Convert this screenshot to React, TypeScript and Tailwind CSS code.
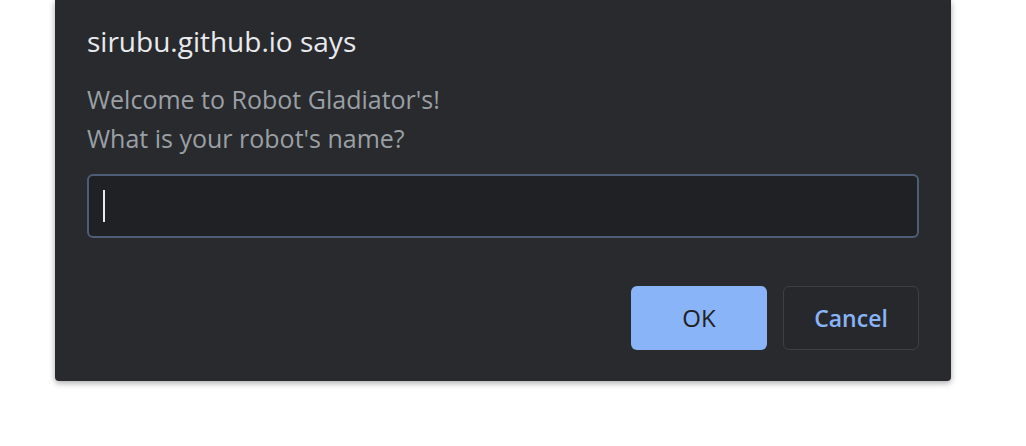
export default function App() {
  return (
    <div className="h-[446px] w-[1026px] bg-white" style={{ fontFamily: '"Open Sans", "Noto Sans", sans-serif' }}>
      <div className="ml-[55px] flex h-[381px] w-[896px] flex-col rounded-b-[4px] bg-[#292a2d] px-[32px] shadow-[0_2px_6px_rgba(0,0,0,0.35)]">
        <h1 className="mt-[25px] text-[28px] leading-[32px] text-[#e8eaed]">sirubu.github.io says</h1>
        <div className="mt-[23px] text-[25px] leading-[39px] text-[#9aa0a6]">
          <p>Welcome to Robot Gladiator's!</p>
          <p>What is your robot's name?</p>
        </div>
        <div className="mt-[16px] box-border flex h-[64px] shrink-0 items-center rounded-[6px] border-2 border-[#4f5d79] bg-[#202124] pl-[14px]">
          <span className="h-[32px] w-[2px] bg-[#e8eaed]" />
        </div>
        <div className="mt-[48px] flex justify-end gap-[16px]">
          <button className="h-[64px] w-[136px] rounded-[6px] bg-[#8ab4f8] text-[24px] font-medium text-[#202124]">OK</button>
          <button className="h-[64px] w-[136px] rounded-[6px] border border-[#3c4043] bg-[#27282b] text-[23px] font-semibold text-[#8ab4f8]">Cancel</button>
        </div>
      </div>
    </div>
  );
}
